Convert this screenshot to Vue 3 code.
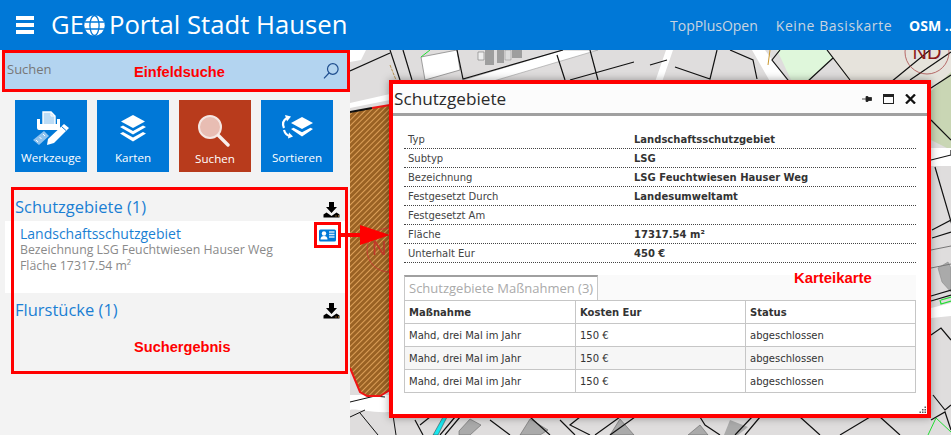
<template>
  <div class="page">
    <header class="topbar">
      <div class="brand">
        <div class="burger"><span /><span /><span /></div>
        <div class="logo">
          <span>GE</span>
          <svg class="globe" width="21" height="21" viewBox="0 0 21 21">
            <circle cx="10.5" cy="10.5" r="10.2" fill="#fff" />
            <ellipse cx="10.5" cy="10.5" rx="4.6" ry="10" fill="none" stroke="#0078d7" stroke-width="1.3" />
            <path d="M0.5 7h20M0.5 14h20" stroke="#0078d7" stroke-width="1.3" />
          </svg>
          <span class="logo-rest">Portal Stadt Hausen</span>
        </div>
      </div>
      <nav class="basemaps">
        <a>TopPlusOpen</a>
        <a class="wide">Keine Basiskarte</a>
        <a class="active">OSM ...</a>
      </nav>
    </header>

    <div class="content">
      <aside class="sidebar">
        <div class="search">
          <span class="search-text">Suchen</span>
          <svg width="18" height="18" viewBox="0 0 18 18" fill="none" stroke="#1f4e8f" stroke-width="1.2">
            <circle cx="10.8" cy="7" r="5.3" />
            <path d="M7 11 L2 16.4" />
          </svg>
          <span class="note note-search">Einfeldsuche</span>
        </div>

        <div class="tools">
          <button class="tool">
            <svg width="38" height="38" viewBox="0 0 38 38">
              <path d="M11 3h8l4 4v9H11z" fill="#bcdcf6" stroke="#fff" stroke-width="1.4" />
              <path d="M19 3v4h4" fill="none" stroke="#fff" stroke-width="1" />
              <path d="M5 10h3v5h17v-5h3v11H7a2 2 0 0 1-2-2z" fill="#fff" />
              <path d="M1 31 12 22l5 5-10 9z" fill="#8ec3ef" />
              <path d="M4 31l2 2M7.500 28l2 2M11 25l2 2" stroke="#fff" stroke-width="1" />
              <path d="M16 30 32 15l5 4-15 15-7 2z" fill="#fff" />
              <path d="M29.500 17.500l4.500 4" stroke="#0078d7" stroke-width="1" />
            </svg>
            <span>Werkzeuge</span>
          </button>
          <button class="tool">
            <svg width="38" height="38" viewBox="0 0 38 38" fill="#fff">
              <path d="M19 6 31 12.500 19 19 7 12.500z" />
              <path d="M6 18l3-1.500 10 5.500 10-5.500 3 1.500-13 7.500z" />
              <path d="M6 24.500l3-1.500 10 5.500 10-5.500 3 1.500-13 8z" />
            </svg>
            <span>Karten</span>
          </button>
          <button class="tool tool-active">
            <svg width="38" height="38" viewBox="0 0 38 38">
              <circle cx="14" cy="18" r="11" fill="#e8bdb3" stroke="#f5e6e2" stroke-width="2" />
              <path d="M22.500 26.500 32 36" stroke="#f8efec" stroke-width="3.400" stroke-linecap="round" />
            </svg>
            <span>Suchen</span>
          </button>
          <button class="tool">
            <svg width="38" height="38" viewBox="0 0 38 38" fill="#fff">
              <path d="M24 8l11 6-11 6-11-6z" />
              <path d="M13 20l2.500-1.300 8.500 4.600 8.500-4.600L35 20l-11 7.500z" />
              <path d="M6 19C4 14.500 5.500 11 9 9" fill="none" stroke="#fff" stroke-width="2.200" />
              <path d="M7 6l6 1.500-4 5z" />
              <path d="M6 21c1 3.500 3 5.500 6 6" fill="none" stroke="#fff" stroke-width="2.200" />
              <path d="M11 23.500l4 4-5 2z" />
            </svg>
            <span>Sortieren</span>
          </button>
        </div>

        <section class="results">
          <div class="group-head">
            <h3>Schutzgebiete (1)</h3>
            <svg class="dl" width="17" height="17" viewBox="0 0 17 17"><use href="#dl-icon" /></svg>
          </div>
          <div class="hit">
            <div>
              <div class="hit-title">Landschaftsschutzgebiet</div>
              <div class="hit-line">Bezeichnung LSG Feuchtwiesen Hauser Weg</div>
              <div class="hit-line">Fläche 17317.54 m²</div>
            </div>
            <div class="card-btn">
              <svg width="17" height="13" viewBox="0 0 17 13">
                <rect width="17" height="12" y="0.500" rx="1.500" fill="#0078d7" />
                <circle cx="5" cy="4.500" r="2.200" fill="#fff" />
                <path d="M1.500 10.500c0-2.500 1.500-3.500 3.500-3.500s3.500 1 3.500 3.500z" fill="#fff" />
                <path d="M10 3h5.500M10 5.500h5.500M10 8h5.500" stroke="#cfe6fa" stroke-width="1.300" />
              </svg>
            </div>
          </div>
          <div class="group-head group-second">
            <h3>Flurstücke (1)</h3>
            <svg class="dl" width="17" height="17" viewBox="0 0 17 17">
              <defs>
                <g id="dl-icon">
                  <path d="M6 1h5v5h3l-5.500 6L3 6h3z" fill="#000" />
                  <path d="M0.500 16.500v-3l3-2 5 3.500 5-3.500 3 2v3z" fill="#000" />
                  <path d="M12.500 15h1M15 15h1" stroke="#e8a33d" stroke-width="1" />
                </g>
              </defs>
              <use href="#dl-icon" />
            </svg>
          </div>
          <span class="note note-results">Suchergebnis</span>
        </section>
      </aside>

      <main class="map">
        <svg class="map-canvas" viewBox="350 50 601 385" width="601" height="385">
          <defs>
            <pattern id="hatch" width="4" height="4" patternUnits="userSpaceOnUse" patternTransform="rotate(45)">
              <rect width="4" height="4" fill="#9a6224" />
              <rect width="1" height="4" fill="#dc9f58" />
            </pattern>
          </defs>
          <rect x="350" y="50" width="601" height="385" fill="#dfdddd" />

          <!-- Beige und Grünflächen oben rechts -->
          <path d="M827 50H951V90L940 95 925 130H931V85H850z" fill="#e6e3dc" />
          <path d="M777 50H827L833 58 807 82H792z" fill="#dff7db" />
          <path d="M930 92 951 72V150L931 140z" fill="#c9d6b4" />

          <!-- Strassen -->
          <path d="M463 80 563 50H598L470 88z" fill="#fff" stroke="#9a9a9a" stroke-width="0.600" />
          <path d="M666 50H673L661 85H654z" fill="#fff" />
          <path d="M752 50 765 50 790 85H772z" fill="#fff" />
          <path d="M931 148H951V166H931z" fill="#fff" />
          <path d="M931 308 951 303V316L931 318z" fill="#fff" />
          <path d="M350 395H390V412C370 413 355 408 350 410z" fill="#fff" />
          <path d="M350 103 390 94V100L350 108z" fill="#fff" />

          <!-- Gebäude -->
          <path d="M350 50H366L361 60 350 62z" fill="#fff" />
          <path d="M421 57 457 50 460 70 425 80z" fill="#fff" stroke="#888" stroke-width="0.800" />
          <path d="M478 52h6v8h-6z" fill="#eee" stroke="#777" stroke-width="0.600" />
          <path d="M485 50h9v15h-9zM497 50h7v13h-7zM512 50h10v8h-10z" fill="#9e9e9e" />
          <path d="M505 50h6v10h-6z" fill="#ddd" stroke="#888" stroke-width="0.500" />
          <path d="M938 268 948 262 951 268V292L942 282z" fill="#aaa" stroke="#888" stroke-width="0.600" />
          <path d="M459 431 470 419 481 425 470 435H459zM700 425 708 435H688zM530 419 548 430 540 435H520zM620 419 634 435H610z" fill="#aaa" stroke="#666" stroke-width="0.600" />
          <path d="M730 420 748 427 738 435H724z" fill="#aaa" />

          <!-- Flurstücksgrenzen -->
          <g fill="none" stroke="#111" stroke-width="1.200">
            <path d="M350 71 390 53M390 50 400 80M403 50 412 80M457 50 463 79 563 50M557 55 565 80M590 50 598 80M570 80 634 62" />
            <path d="M650 65 667 60M675 67 710 79 717 50M730 50 753 60 757 79M780 50 772 60 792 85M827 50 850 80M833 58 807 82" />
            <path d="M891 82 930 50M910 80 951 52M931 88 951 75" />
            <path d="M931 120 951 140M931 160 951 155 951 150M935 167 952 225M932 230 951 220M932 238 951 232" />
            <path d="M931 296 951 290M931 301 951 295M931 335 941 328 951 340M933 395 945 410 951 405M931 420 945 412 951 430" />
            <path d="M350 402 375 396 385 397M360 413 378 435M350 417 365 410M390 395 396 435" stroke-width="1" />
            <path d="M415 420 423 435M430 417 420 425M455 417 440 435M460 417 445 435M490 420 510 435M530 417 550 435M560 420 575 435M580 417 570 425 590 435M620 417 595 435M635 417 610 435M660 417 700 417 705 425 720 435M752 417 735 435M760 417 745 435M800 417 820 435M870 417 840 435M880 417 900 435" />
          </g>
          <path d="M931 250 951 246" stroke="#777" fill="none" />
          <path d="M931 268 951 264" stroke="#777" fill="none" />
          <path d="M941 300 951 297M940 300 941 304 951 301" stroke="#22dd33" fill="none" stroke-width="1.200" />
          <path d="M421 57 430 50" stroke="#22dd33" fill="none" />
          <path d="M390 65 396 80" stroke="#b89350" fill="none" stroke-dasharray="3 1" />
          <path d="M770 50 768 65" stroke="#c9982f" fill="none" />
          <path d="M928 435 936 418M936 418 951 432" stroke="#22dd33" fill="none" />
          <path d="M433 435 443 417H447L438 435z" fill="#19e6ee" stroke="#333" stroke-width="0.500" />

          <!-- Schutzgebiet -->
          <path d="M350 112 390 105V390L380 396H367L360 392 350 368z" fill="url(#hatch)" />
          <path d="M350 368 360 392 367 396H380L390 390" fill="none" stroke="#f01414" stroke-width="2" />
          <path d="M350 112 372 108" stroke="#111" stroke-width="2" />
          <path d="M372 108 390 105" stroke="#f01414" stroke-width="2" />
          <circle cx="389" cy="250" r="22" fill="none" stroke="#c33" stroke-width="0.800" />
          <text x="372" y="255" class="map-label">N</text>
          <circle cx="927" cy="52" r="22" fill="none" stroke="#a94a4a" stroke-width="0.800" />
          <text x="927" y="59" text-anchor="middle" class="map-label-dark">ND</text>
        </svg>

        <div class="arrow-head" />

        <section class="window">
          <div class="window-head">
            <span class="window-title">Schutzgebiete</span>
            <div class="window-actions">
              <svg width="10" height="10" viewBox="0 0 10 10"><path d="M0 5h4M4 2.500h2v5H4zM6 3.500h3.500v3H6z" fill="#222" stroke="#222" stroke-width="0.800" /></svg>
              <svg width="11" height="10" viewBox="0 0 11 10"><rect x="0.500" y="0.500" width="10" height="9" fill="none" stroke="#222" /><rect x="0.500" y="0.500" width="10" height="2.500" fill="#222" /></svg>
              <svg width="11" height="10" viewBox="0 0 11 10"><path d="M1 0.500 10 9.500M10 0.500 1 9.500" stroke="#111" stroke-width="2.300" /></svg>
            </div>
          </div>

          <div class="window-body">
            <div class="details">
              <div v-for="row in details" :key="row.label" class="detail-row">
                <span>{{ row.label }}</span>
                <b>{{ row.value }}</b>
              </div>
            </div>

            <div class="tabs">
              <div class="tab">Schutzgebiete Maßnahmen (3)</div>
            </div>
            <table class="measures">
              <thead>
                <tr>
                  <th>Maßnahme</th>
                  <th>Kosten Eur</th>
                  <th>Status</th>
                </tr>
              </thead>
              <tbody>
                <tr v-for="n in 3" :key="n">
                  <td>Mahd, drei Mal im Jahr</td>
                  <td>150 €</td>
                  <td>abgeschlossen</td>
                </tr>
              </tbody>
            </table>
          </div>

          <span class="note note-tab">Karteikarte</span>
          <svg class="grip" width="8" height="8" viewBox="0 0 8 8" fill="#555">
            <rect x="5.500" y="0.500" width="1.500" height="1.500" />
            <rect x="3" y="3" width="1.500" height="1.500" />
            <rect x="5.500" y="3" width="1.500" height="1.500" />
            <rect x="0.500" y="5.500" width="1.500" height="1.500" />
            <rect x="3" y="5.500" width="1.500" height="1.500" />
            <rect x="5.500" y="5.500" width="1.500" height="1.500" />
          </svg>
        </section>
      </main>
    </div>
  </div>
</template>

<script setup>
const details = [
  { label: 'Typ', value: 'Landschaftsschutzgebiet' },
  { label: 'Subtyp', value: 'LSG' },
  { label: 'Bezeichnung', value: 'LSG Feuchtwiesen Hauser Weg' },
  { label: 'Festgesetzt Durch', value: 'Landesumweltamt' },
  { label: 'Festgesetzt Am', value: '' },
  { label: 'Fläche', value: '17317.54 m²' },
  { label: 'Unterhalt Eur', value: '450 €' },
]
</script>

<style>
html,
body {
  margin: 0;
  overflow: hidden;
}
</style>

<style scoped>
.page {
  width: 951px;
  height: 435px;
  overflow: hidden;
  font-family: "Open Sans", "Noto Sans", sans-serif;
}

.topbar {
  height: 50px;
  background: #0078d7;
  display: flex;
  align-items: center;
  color: #fff;
}

.brand {
  width: 670px;
  flex-shrink: 0;
  display: flex;
  align-items: center;
  padding-left: 16px;
  box-sizing: border-box;
}

.burger {
  width: 18px;
  display: flex;
  flex-direction: column;
  gap: 3px;
}

.burger span {
  height: 4px;
  background: #fff;
}

.logo {
  display: flex;
  align-items: center;
  margin-left: 17px;
  font-size: 25.700px;
  line-height: 30px;
}

.globe {
  margin: 0 4px 0 0;
}

.basemaps {
  display: flex;
  gap: 18px;
  font-size: 14px;
  white-space: nowrap;
  color: #c8d4e0;
}

.basemaps .wide {
  letter-spacing: 0.550px;
}

.basemaps .active {
  margin-left: -1px;
  color: #fff;
  font-weight: 700;
}

.content {
  display: flex;
  height: 385px;
}

.sidebar {
  width: 350px;
  flex-shrink: 0;
  background: #f3f3f3;
  position: relative;
  z-index: 2;
}

.search {
  height: 42px;
  margin-left: 2px;
  box-sizing: border-box;
  border: 3px solid #f00;
  background: #b3d4f0;
  display: flex;
  align-items: center;
  justify-content: space-between;
  padding: 0 7px 0 2px;
  position: relative;
}

.search-text {
  font-size: 13px;
  color: #777;
  margin-top: -5px;
}

.note {
  position: absolute;
  font-family: "Liberation Sans", Arial, sans-serif;
  font-weight: 700;
  font-size: 14.600px;
  line-height: 16px;
  color: #f00;
  white-space: nowrap;
}

.note-search {
  left: 129px;
  top: 11px;
}

.note-results {
  left: 123px;
  top: 152px;
}

.note-tab {
  left: 401px;
  top: 186px;
  font-size: 14.900px;
}

.tools {
  display: flex;
  gap: 10px;
  padding: 8px 0 0 15px;
}

.tool {
  width: 72px;
  height: 72px;
  border: 0;
  padding: 9px 0 0;
  background: #0078d7;
  color: #fff;
  font-family: inherit;
  font-size: 11.600px;
  display: flex;
  flex-direction: column;
  align-items: center;
}

.tool span {
  margin-top: 3px;
  line-height: 16px;
}

.tool-active {
  background: #b83b1c;
}

.tool-active span {
  margin-top: 4px;
}

.results {
  position: relative;
  box-sizing: border-box;
  margin: 15px 2px 0 11px;
  height: 187px;
  padding: 3px;
  padding-right: 0;
}

/* Rahmen liegt über der weissen Trefferzeile */
.results::after {
  content: "";
  position: absolute;
  inset: 0;
  border: 3px solid #f00;
  pointer-events: none;
}

.group-head {
  height: 31px;
  box-sizing: border-box;
  display: flex;
  align-items: center;
  justify-content: space-between;
  padding: 2px 8px 0 1px;
}

.group-head h3 {
  margin: 0;
  font-size: 16.500px;
  font-weight: 400;
  color: #1b7fd3;
}

.group-head .dl {
  margin-top: 6px;
}

.group-second {
  height: 32px;
  padding-top: 0;
}

.group-second .dl {
  margin-top: 2px;
}

.hit {
  margin: 0 0 0 -9px;
  width: 340px;
  height: 72px;
  background: #fff;
  box-sizing: border-box;
  padding: 5px 7px 0 15px;
  display: flex;
  justify-content: space-between;
  position: relative;
}

.hit-title {
  font-size: 14px;
  line-height: 16px;
  color: #1b7fd3;
}

.hit-line {
  font-size: 12.300px;
  line-height: 16px;
  color: #8a8a8a;
}

.card-btn {
  position: absolute;
  left: 309px;
  top: 1px;
  width: 27px;
  height: 26px;
  box-sizing: border-box;
  border: 3px solid #f00;
  display: flex;
  align-items: center;
  justify-content: center;
}

.card-btn::after {
  content: "";
  position: absolute;
  left: 24px;
  top: 8px;
  width: 20px;
  height: 4px;
  background: #f00;
}

.map {
  position: relative;
  flex: 1;
  overflow: hidden;
}

.map-canvas {
  display: block;
}

.map-label {
  font-family: "Liberation Sans", Arial, sans-serif;
  font-size: 20px;
  fill: #c3382a;
}

.map-label-dark {
  font-family: "Liberation Sans", Arial, sans-serif;
  font-size: 20px;
  fill: #8b1a1a;
}

.arrow-head {
  position: absolute;
  left: 10px;
  top: 175px;
  width: 0;
  height: 0;
  border-top: 10px solid transparent;
  border-bottom: 10px solid transparent;
  border-left: 30px solid #f00;
}

.window {
  position: absolute;
  left: 39px;
  top: 30px;
  width: 542px;
  height: 338px;
  box-sizing: border-box;
  border: 4px solid #f00;
  background: #fff;
  box-shadow: 0 0 8px rgba(0, 0, 0, 0.35);
  color: #333;
}

.window-head {
  height: 32px;
  box-sizing: border-box;
  background: #fcfcfc;
  border-bottom: 3px solid #a0a0a0;
  display: flex;
  align-items: center;
  justify-content: space-between;
  padding: 0 16px 0 1px;
}

.window-title {
  font-size: 17.200px;
  color: #2b2b2b;
}

.window-actions {
  display: flex;
  align-items: center;
  gap: 11px;
  margin-right: -5px;
}

.window-body {
  padding: 14px 11px 0 11px;
  font-family: "DejaVu Sans", Verdana, sans-serif;
  font-size: 10px;
}

.detail-row {
  display: grid;
  grid-template-columns: 226px 1fr;
  height: 19px;
  box-sizing: border-box;
  border-bottom: 1px dotted #444;
  padding-left: 4px;
  line-height: 20px;
  color: #444;
}

.detail-row b {
  color: #333;
}

.tabs {
  margin-top: 12px;
  height: 25px;
  background: #fafafa;
}

.tab {
  width: 194px;
  height: 25px;
  box-sizing: border-box;
  border-top: 2px solid #a0a0a0;
  border-left: 1px solid #c8c8c8;
  border-right: 1px solid #c8c8c8;
  background: #fff;
  font-family: "Open Sans", "Noto Sans", sans-serif;
  font-size: 13px;
  line-height: 22px;
  padding-left: 4px;
  color: #aaa;
  white-space: nowrap;
}

.measures {
  width: 100%;
  border-collapse: collapse;
  table-layout: fixed;
}

.measures th,
.measures td {
  border: 1px solid #c6c6c6;
  height: 23px;
  box-sizing: border-box;
  padding: 0 4px;
  text-align: left;
  color: #333;
}

.measures th:nth-child(1) {
  width: 171px;
}

.measures th:nth-child(2) {
  width: 170px;
}

.measures tbody tr:nth-child(2) td {
  background: #f6f6f6;
}

.grip {
  position: absolute;
  right: 0;
  bottom: 0;
}
</style>
